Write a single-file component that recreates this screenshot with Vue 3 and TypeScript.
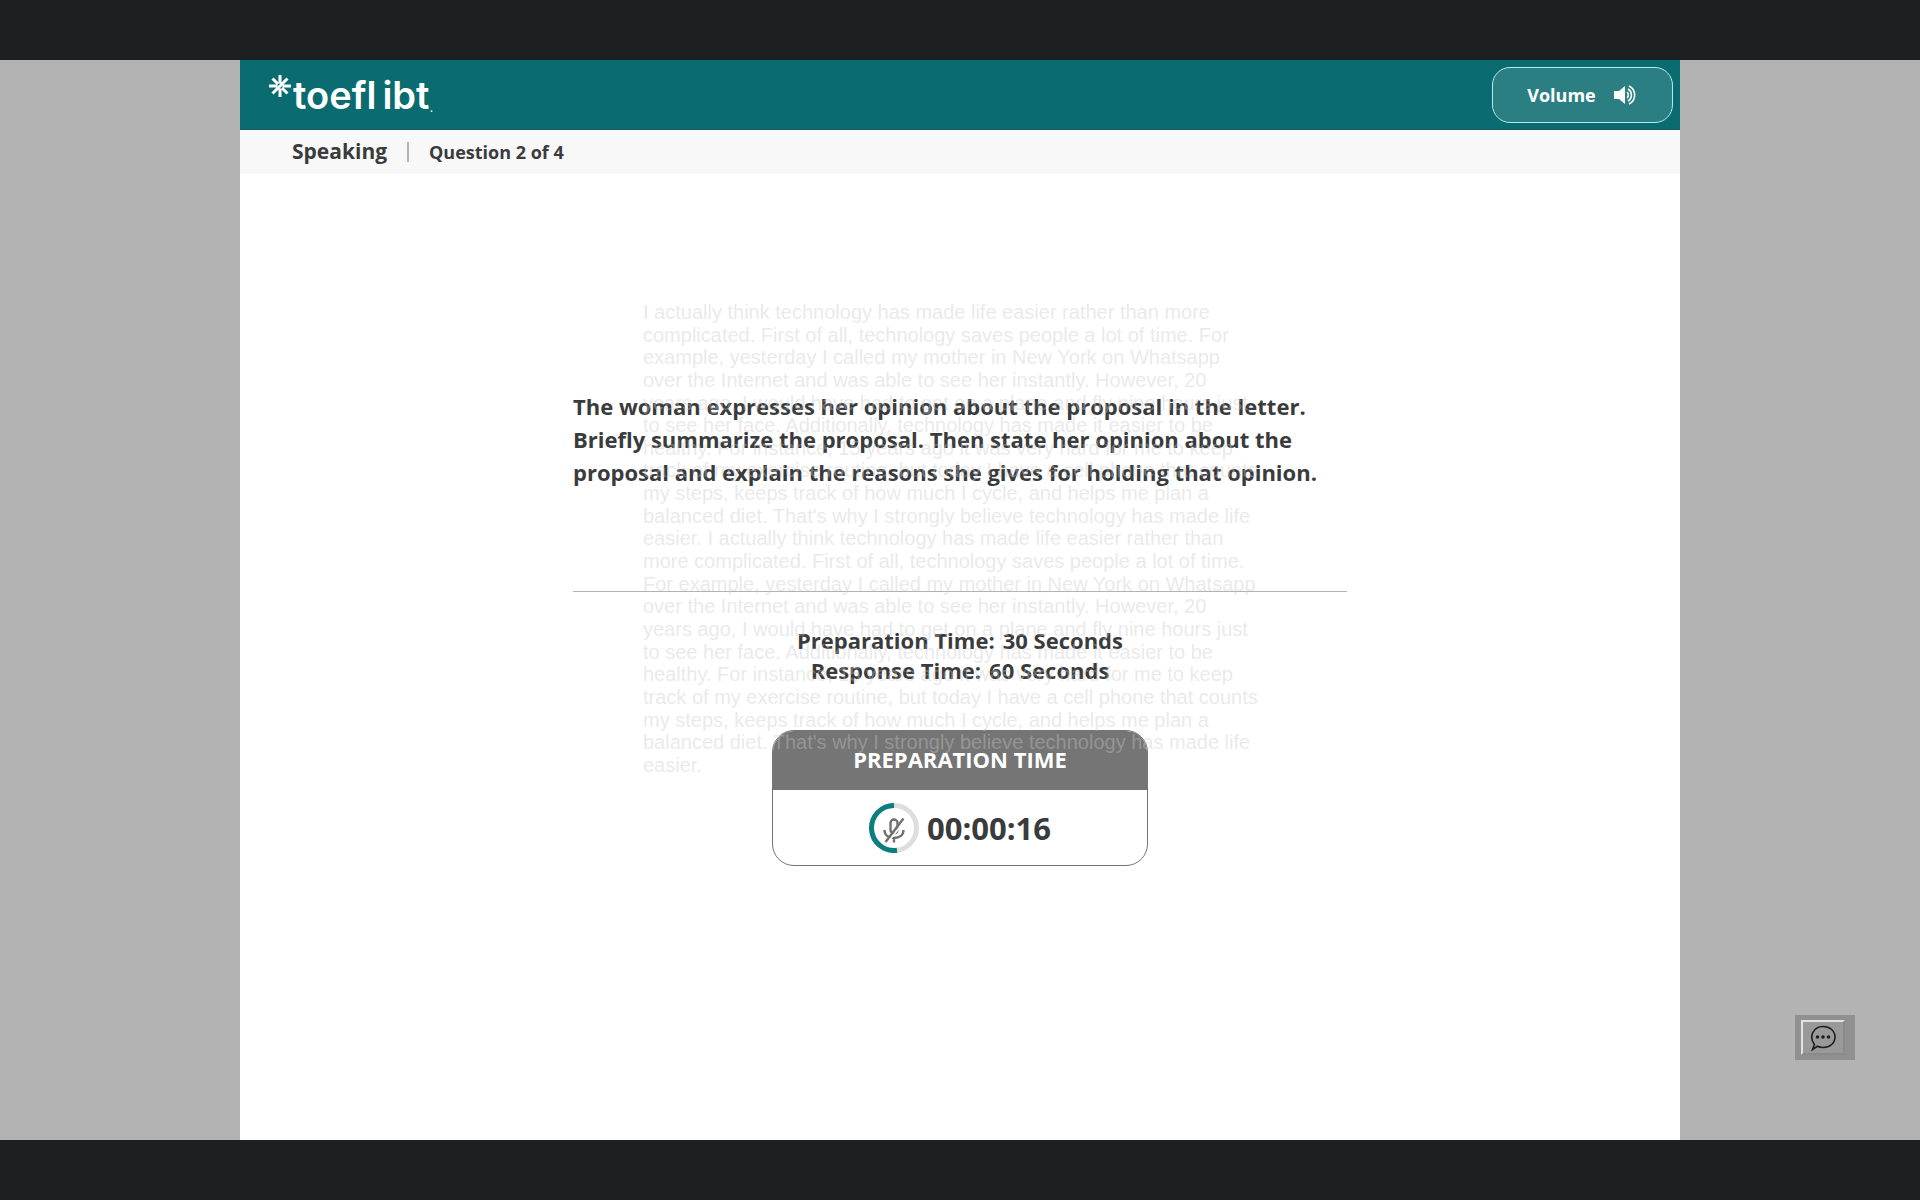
<script setup lang="ts">
import { ref, computed } from 'vue'

const section = ref('Speaking')
const question = ref({ current: 2, total: 4 })
const promptLines: string[] = [
  'The woman expresses her opinion about the proposal in the letter.',
  'Briefly summarize the proposal. Then state her opinion about the',
  'proposal and explain the reasons she gives for holding that opinion.',
]
const times = [
  { label: 'Preparation Time:', seconds: 30 },
  { label: 'Response Time:', seconds: 60 },
]
const remaining = ref(16)
const clock = computed(() => `00:00:${String(remaining.value).padStart(2, '0')}`)

const sample: string[] = [
  'I actually think technology has made life easier rather than more',
  'complicated. First of all, technology saves people a lot of time. For',
  'example, yesterday I called my mother in New York on Whatsapp',
  'over the Internet and was able to see her instantly. However, 20',
  'years ago, I would have had to get on a plane and fly nine hours just',
  'to see her face. Additionally, technology has made it easier to be',
  'healthy. For instance, 15 years ago it was very hard for me to keep',
  'track of my exercise routine, but today I have a cell phone that counts',
  'my steps, keeps track of how much I cycle, and helps me plan a',
  "balanced diet. That's why I strongly believe technology has made life",
  'easier. I actually think technology has made life easier rather than',
  'more complicated. First of all, technology saves people a lot of time.',
  'For example, yesterday I called my mother in New York on Whatsapp',
  'over the Internet and was able to see her instantly. However, 20',
  'years ago, I would have had to get on a plane and fly nine hours just',
  'to see her face. Additionally, technology has made it easier to be',
  'healthy. For instance, 15 years ago it was very hard for me to keep',
  'track of my exercise routine, but today I have a cell phone that counts',
  'my steps, keeps track of how much I cycle, and helps me plan a',
  "balanced diet. That's why I strongly believe technology has made life",
  'easier.',
]
</script>

<template>
  <div class="screen">
    <main class="page">
      <header class="topbar">
        <div class="logo">
          <svg class="star" viewBox="0 0 22 22" aria-hidden="true">
            <path d="M11 0v8.500M11 13.500v8.500M0 11h8.500M13.500 11h8.500M3.500 3.500l5.500 5.500M18.500 3.500L3.500 18.500M13 13l5.500 5.500" />
          </svg>
          <span class="word">toefl</span>
          <span class="word">ibt</span>
          <span class="dot">.</span>
        </div>
        <button class="volume" type="button">
          Volume
          <svg viewBox="0 0 24 20" aria-hidden="true">
            <path class="fill" d="M0 6h5l6-5v18l-6-5H0z" />
            <path d="M13 7a4 4 0 0 1 0 6M14 4a7 7 0 0 1 0 12M15 1a10 10 0 0 1 0 18" />
          </svg>
        </button>
      </header>
      <div class="subbar">
        <span class="section">{{ section }}</span>
        <span class="divider"></span>
        <span class="question">Question {{ question.current }} of {{ question.total }}</span>
      </div>

      <section class="content">
        <p class="prompt">
          <span v-for="line in promptLines" :key="line">{{ line }}</span>
        </p>
        <hr />
        <div class="times">
          <div v-for="t in times" :key="t.label" class="time">
            <span>{{ t.label }}</span>
            <span>{{ t.seconds }} Seconds</span>
          </div>
        </div>
        <div class="timer">
          <h2>PREPARATION TIME</h2>
          <div class="count">
            <svg viewBox="0 0 50 50" aria-hidden="true">
              <circle class="track" cx="25" cy="25" r="22.5" />
              <path class="progress" d="M28 47.3A22.5 22.5 0 1 1 25 2.5" />
              <path class="mic" d="M21.500 27v-7a3.500 3.500 0 0 1 7 0v7a3.500 3.500 0 0 1-7 0M15.500 27c0 5 4 8 9.500 8s9.500-3 9.500-8M25 35v4.500" />
              <path class="gap" d="M18.500 39.500L36 17.500" />
              <path class="mic" d="M16.500 39L34.500 15.500" />
            </svg>
            <span>{{ clock }}</span>
          </div>
        </div>
        <div class="sample">
          <span v-for="(line, i) in sample" :key="i">{{ line }}</span>
        </div>
      </section>
    </main>
    <div class="chat">
      <button type="button" aria-label="Chat">
        <svg viewBox="0 0 26 26" aria-hidden="true">
          <path d="M4.500 19.500C-1.500 12 3 1.500 13 1.500c7 0 12 4.500 12 10.500s-5 10.500-12 10.500c-2 0-4-.4-5.500-1.200L2.500 24.500z" />
          <circle cx="7.500" cy="12" r="1.800" /><circle cx="13" cy="12" r="1.800" /><circle cx="18.500" cy="12" r="1.800" />
        </svg>
      </button>
    </div>
  </div>
</template>

<style>
body {
  margin: 0;
  background: #b3b3b3;
}
</style>

<style scoped>
.screen {
  box-sizing: border-box;
  min-height: 100vh;
  display: flex;
  justify-content: center;
  border: solid #1d2021;
  border-width: 60px 0;
  background: #b3b3b3;
  font-family: "Open Sans", "Noto Sans", sans-serif;
  color: #3a3b3d;
}
.page {
  width: 75%;
  background: #fff;
}
.topbar {
  box-sizing: border-box;
  height: 70px;
  padding: 0 7px 0 29px;
  display: flex;
  align-items: center;
  justify-content: space-between;
  background: #0a6b70;
  border-bottom: 1px solid #17595f;
}
.logo {
  display: flex;
  align-items: flex-end;
  color: #fff;
}
.star {
  width: 22px;
  height: 22px;
  margin: 0 2px 22px 0;
  fill: none;
  stroke: #fff;
  stroke-width: 3;
}
.word {
  font: 600 38px/48px Inter, "Liberation Sans", sans-serif;
}
.word + .word {
  margin-left: 6px;
}
.dot {
  font: 14px/24px "Liberation Sans", Arial, sans-serif;
}
.volume {
  width: 181px;
  height: 56px;
  padding: 0;
  display: flex;
  align-items: center;
  justify-content: center;
  gap: 18px;
  border: 1px solid #b5eaec;
  border-radius: 18px;
  background: #2b7f83;
  color: #fff;
  font: 700 18px/24px "Open Sans", sans-serif;
}
.volume svg {
  width: 24px;
  height: 20px;
  fill: none;
  stroke: #fff;
  stroke-width: 1.6;
}
.volume .fill {
  fill: #fff;
  stroke: none;
}
.subbar {
  height: 44px;
  padding-left: 52px;
  display: flex;
  align-items: center;
  background: #f8f8f8;
}
.section {
  padding-bottom: 2px;
  font-size: 21px;
  line-height: 30px;
  font-weight: 700;
}
.divider {
  width: 2px;
  height: 20px;
  margin: 0 20px;
  background: #b4b4b4;
}
.question {
  font-size: 18px;
  line-height: 24px;
  font-weight: 700;
}
.content {
  position: relative;
  width: 774px;
  margin: 0 auto;
  padding-top: 216px;
}
.prompt {
  margin: 0;
  display: flex;
  flex-direction: column;
  font-size: 22px;
  line-height: 33px;
  font-weight: 700;
  white-space: nowrap;
}
hr {
  margin: 102px 0 33px;
  border: 0;
  border-top: 1px solid #b0b3b1;
}
.times {
  font-size: 22px;
  line-height: 30px;
  font-weight: 700;
}
.time {
  display: flex;
  justify-content: center;
  gap: 8px;
}
.timer {
  box-sizing: border-box;
  width: 376px;
  margin: 45px auto 0;
  overflow: hidden;
  border: 1px solid #757575;
  border-radius: 22px;
  background: #fff;
}
.timer h2 {
  margin: 0;
  padding: 13px 0 16px;
  background: #757575;
  color: #fff;
  text-align: center;
  font-size: 22px;
  line-height: 30px;
  font-weight: 700;
}
.count {
  height: 75px;
  display: flex;
  align-items: center;
  justify-content: center;
  gap: 8px;
  font-size: 31px;
  line-height: 40px;
  font-weight: 700;
}
.count svg {
  width: 50px;
  height: 50px;
  fill: none;
}
.track { stroke: #dedede; stroke-width: 5; }
.progress { stroke: #0b7f7f; stroke-width: 5; }
.mic { stroke: #707070; stroke-width: 2.4; }
.gap { stroke: #fff; stroke-width: 2; }
.sample {
  position: absolute;
  left: 70px;
  top: 127px;
  height: 475px;
  display: flex;
  flex-direction: column;
  justify-content: space-between;
  font: 20px/22px "Liberation Sans", Arial, sans-serif;
  color: rgba(200, 200, 200, 0.4);
  white-space: nowrap;
  pointer-events: none;
}
.chat {
  position: absolute;
  right: 65px;
  bottom: 140px;
  padding: 5px 10px 5px 6px;
  background: #909090;
}
.chat button {
  box-sizing: border-box;
  width: 44px;
  height: 35px;
  padding: 0;
  display: flex;
  align-items: center;
  justify-content: center;
  border: 2px solid;
  border-color: #e2e2e2 #8a8a8a #8a8a8a #e2e2e2;
  background: #999;
}
.chat svg {
  width: 26px;
  height: 26px;
  fill: none;
  stroke: #1e1e1e;
  stroke-width: 1.6;
}
.chat circle {
  fill: #1e1e1e;
  stroke: none;
}
</style>
